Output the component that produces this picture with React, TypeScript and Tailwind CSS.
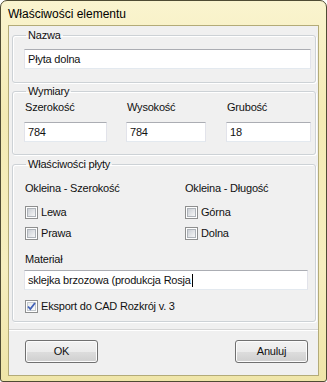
import type { ReactNode } from "react";

type GroupProps = {
  title: string;
  className?: string;
  children: ReactNode;
};

function Group({ title, className, children }: GroupProps) {
  return (
    <fieldset
      className={`ml-[3px] mr-[2px] rounded-[3px] border border-[#cdd2d6] shadow-[inset_1px_1px_0_#ffffff,1px_1px_0_#ffffff] ${className ?? ""}`.trim()}
    >
      <legend className="ml-[2px] px-[2px] leading-[13px]">{title}</legend>
      {children}
    </fieldset>
  );
}

function TextBox({ value, className, caret }: { value: string; className?: string; caret?: boolean }) {
  return (
    <div
      className={`flex h-[20px] items-center border border-[#e2e3ea] border-t-[#abadb3] border-b-[#e3e9ef] bg-white pl-[3px] leading-[13px] ${className ?? ""}`.trim()}
    >
      <span>{value}</span>
      {caret && <span className="ml-[1px] inline-block h-[13px] w-[1px] bg-black" />}
    </div>
  );
}

function CheckBox({ label, checked }: { label: string; checked?: boolean }) {
  return (
    <div className="flex h-[13px] items-center gap-[3px] leading-[13px]">
      <span className="relative flex h-[13px] w-[13px] shrink-0 items-center justify-center border border-[#8e8f8f] bg-white">
        <span
          className={`h-[9px] w-[9px] border ${
            checked
              ? "border-[#c4c9ce] bg-[linear-gradient(135deg,#e8ebee,#fbfbfb)]"
              : "border-[#aeb3b9] bg-[linear-gradient(135deg,#cbcfd5,#f6f6f6)]"
          }`}
        />
        {checked && (
          <svg viewBox="0 0 13 13" className="absolute left-[-1px] top-[-1px] h-[13px] w-[13px]">
            <path d="M3 6.5 L5.3 9 L10 3" fill="none" stroke="#4262b8" strokeWidth="1.8" />
          </svg>
        )}
      </span>
      <span>{label}</span>
    </div>
  );
}

function Button({ label }: { label: string }) {
  return (
    <div className="flex h-[23px] w-[73px] items-center justify-center rounded-[3px] border border-[#707070] bg-[linear-gradient(#f2f2f2_0%,#ebebeb_50%,#dddddd_51%,#cfcfcf_100%)] shadow-[inset_0_0_0_1px_#fcfcfc] leading-[13px]">
      {label}
    </div>
  );
}

export default function App() {
  return (
    <div className="flex h-[382px] w-[327px] flex-col rounded-t-[7px] rounded-b-[3px] border border-[#4f4b33] bg-[linear-gradient(180deg,#faf4cf_0%,#f4ebb4_30%,#f6eebf_70%,#efe5a8_100%)] font-['Liberation_Sans',Arial,sans-serif] text-[11px] text-black">
      <div className="flex h-[24px] items-center pl-[7px] pt-[1px] text-[12px]">Właściwości elementu</div>
      <div className="mx-[7px] mb-[5px] flex flex-1 flex-col border border-[#b3ab78] bg-[#f0f0f0] tracking-[-0.2px] text-[#111]">
        <Group title="Nazwa" className="mt-[3px] pb-[13px] pl-[11px] pr-[4px] pt-[7px]">
          <TextBox value="Płyta dolna" />
        </Group>

        <Group title="Wymiary" className="mt-[2px] pb-[12px] pl-[11px] pr-[4px] pt-[3px]">
          <div className="flex">
            <div className="flex w-[83px] flex-col">
              <span className="pl-[1px] leading-[13px]">Szerokość</span>
              <TextBox value="784" className="mt-[8px]" />
            </div>
            <div className="ml-[19px] flex w-[80px] flex-col">
              <span className="pl-[1px] leading-[13px]">Wysokość</span>
              <TextBox value="784" className="mt-[8px]" />
            </div>
            <div className="ml-[20px] flex flex-1 flex-col">
              <span className="pl-[1px] leading-[13px]">Grubość</span>
              <TextBox value="18" className="mt-[8px]" />
            </div>
          </div>
        </Group>

        <Group title="Właściwości płyty" className="mt-[3px] pb-[8px] pl-[11px] pr-[4px] pt-[11px]">
          <div className="flex pl-[1px]">
            <div className="flex w-[160px] flex-col">
              <span className="leading-[13px]">Okleina - Szerokość</span>
              <div className="mt-[11px]">
                <CheckBox label="Lewa" />
              </div>
              <div className="mt-[8px]">
                <CheckBox label="Prawa" />
              </div>
            </div>
            <div className="flex flex-col">
              <span className="leading-[13px]">Okleina - Długość</span>
              <div className="mt-[11px]">
                <CheckBox label="Górna" />
              </div>
              <div className="mt-[8px]">
                <CheckBox label="Dolna" />
              </div>
            </div>
          </div>
          <div className="mt-[13px] pl-[1px] leading-[13px]">Materiał</div>
          <TextBox value="sklejka brzozowa (produkcja Rosja" caret className="mt-[4px] w-[284px]" />
          <div className="mt-[10px] pl-[1px]">
            <CheckBox label="Eksport do CAD Rozkrój v. 3" checked />
          </div>
        </Group>

        <div className="mt-[7px] border-t border-[#d5d5d5] shadow-[0_1px_0_#ffffff]" />

        <div className="mt-[10px] flex justify-between pl-[16px] pr-[10px]">
          <Button label="OK" />
          <Button label="Anuluj" />
        </div>
      </div>
    </div>
  );
}
